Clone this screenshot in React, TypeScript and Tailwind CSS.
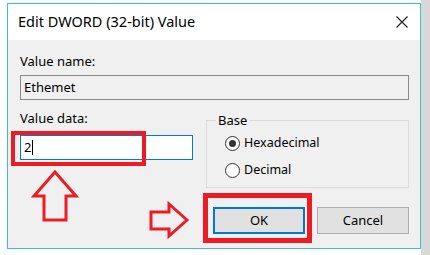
import React from "react";

const font = { fontFamily: '"Noto Sans", "Open Sans", Arial, sans-serif' };

function Radio({ checked, label }: { checked?: boolean; label: string }) {
  return (
    <div className="flex items-center h-[16px]">
      <span className="w-[15px] h-[15px] rounded-full border border-[#333] bg-white flex items-center justify-center">
        {checked && <span className="w-[7px] h-[7px] rounded-full bg-[#333]" />}
      </span>
      <span className="ml-[4px] text-[12.5px] text-black leading-none">{label}</span>
    </div>
  );
}

export default function App() {
  return (
    <div className="relative w-[430px] h-[255px] overflow-hidden bg-white" style={font}>
      <div className="flex h-full">
        <div className="w-[7px] bg-white" />
        <div className="flex flex-col">
          <div className="h-[3px]" />
          <div className="w-[414px] h-[246px] border border-[#35c3cd] bg-[#f0f0f0] flex flex-col">
            {/* title bar */}
            <div className="h-[36px] bg-white flex items-center justify-between pl-[10px] pr-[12px]">
              <span className="text-[14.5px] text-black">Edit DWORD (32-bit) Value</span>
              <svg width="12" height="12" viewBox="0 0 12 12">
                <path d="M0.5 0.5 L11.5 11.5 M11.5 0.5 L0.5 11.5" stroke="#222" strokeWidth="1.2" />
              </svg>
            </div>
            {/* body */}
            <div className="flex flex-col pl-[12px] pr-[11px] pt-[13px]">
              <div className="h-[18px] flex items-center text-[13px] text-black">Value name:</div>
              <div className="mt-[4px] h-[25px] border border-[#8a8a8a] bg-[#f0f0f0] flex items-center pl-[3px] text-[13px] text-black">
                Ethemet
              </div>
              <div className="flex mt-[1px] gap-[13px]">
                <div className="w-[173px] flex flex-col pt-[9px]">
                  <div className="h-[18px] flex items-center text-[13px] text-black">Value data:</div>
                  <div className="mt-[7px] h-[25px] border border-[#0078d7] bg-white flex items-center pl-[3px] text-[13px] text-black">
                    2<span className="w-px h-[15px] bg-black ml-[1px]" />
                  </div>
                </div>
                <div className="flex-1 pt-[19px]">
                  <div className="relative h-[68px] border border-[#dcdcdc] flex flex-col pl-[18px] pt-[14px] gap-[11px]">
                    <span className="absolute left-[9px] top-[-9px] bg-[#f0f0f0] px-[2px] text-[13px] leading-[16px] text-black">Base</span>
                    <Radio checked label="Hexadecimal" />
                    <Radio label="Decimal" />
                  </div>
                </div>
              </div>
              <div className="flex justify-end gap-[12px] mt-[19px]">
                <div className="w-[92px] h-[27px] border-2 border-[#0078d7] bg-[#e1e1e1] flex items-center justify-center text-[13px] text-black">OK</div>
                <div className="w-[92px] h-[27px] border border-[#adadad] bg-[#e1e1e1] flex items-center justify-center text-[13px] text-black">Cancel</div>
              </div>
            </div>
          </div>
        </div>
        <div className="flex-1 bg-[#d8d8d8]" />
      </div>
      {/* annotations overlay */}
      <svg className="absolute left-0 top-0 pointer-events-none" width="430" height="255" viewBox="0 0 430 255">
        <rect x="13" y="133" width="131" height="31" fill="none" stroke="#ed1c24" strokeWidth="4" />
        <rect x="205.5" y="195.5" width="104" height="45" fill="none" stroke="#ed1c24" strokeWidth="5" />
        <polygon points="55,172 76,196 66,196 66,220 44,220 44,196 34,196" fill="none" stroke="#ed1c24" strokeWidth="3" strokeLinejoin="miter" />
        <polygon points="187,220 169,204 169,212 151,212 151,229 169,229 169,236" fill="none" stroke="#ed1c24" strokeWidth="3" strokeLinejoin="miter" />
      </svg>
    </div>
  );
}
